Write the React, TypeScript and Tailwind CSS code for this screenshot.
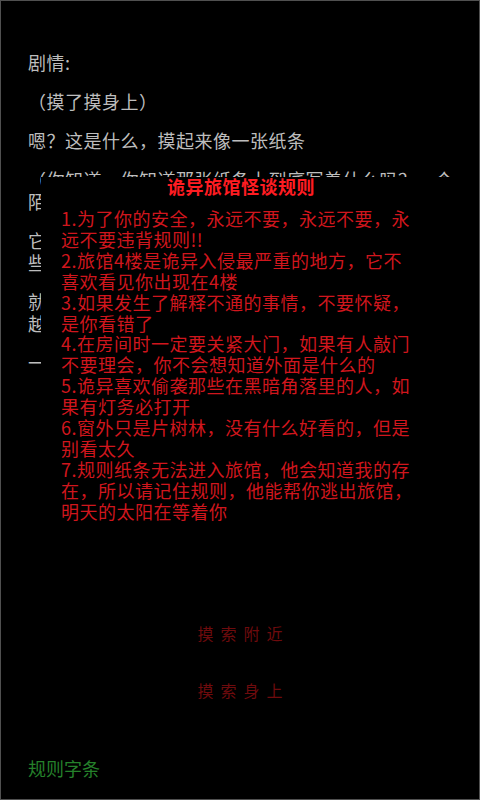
import React from "react";

const rules = [
  "1.为了你的安全，永远不要，永远不要，永",
  "远不要违背规则!!",
  "2.旅馆4楼是诡异入侵最严重的地方，它不",
  "喜欢看见你出现在4楼",
  "3.如果发生了解释不通的事情，不要怀疑，",
  "是你看错了",
  "4.在房间时一定要关紧大门，如果有人敲门",
  "不要理会，你不会想知道外面是什么的",
  "5.诡异喜欢偷袭那些在黑暗角落里的人，如",
  "果有灯务必打开",
  "6.窗外只是片树林，没有什么好看的，但是",
  "别看太久",
  "7.规则纸条无法进入旅馆，他会知道我的存",
  "在，所以请记住规则，他能帮你逃出旅馆，",
  "明天的太阳在等着你",
];

export default function App() {
  return (
    <div
      className="relative flex h-[800px] w-[480px] flex-col overflow-hidden border border-[#505050] bg-black"
      style={{ fontFamily: '"Noto Sans CJK SC", "Noto Sans", sans-serif' }}
    >
      <div className="flex flex-col gap-[17px] pl-[27px] pr-[20px] pt-[50px] text-[18px] leading-[22px] tracking-[0.5px] text-[#bdbdbd]">
        <p>剧情:</p>
        <p>（摸了摸身上）</p>
        <p>嗯？这是什么，摸起来像一张纸条</p>
        <p>（你知道，你知道那张纸条上到底写着什么吗？一个陌生的声音在耳边响起）</p>
        <p>它低头看了看手中的纸条，上面用红色的字迹写着一些奇怪的规则</p>
        <p>就在这时，走廊尽头传来了一阵脚步声，越来越近，越来越近</p>
        <p>一切又恢复了平静</p>
      </div>

      <div className="mt-auto flex flex-col items-center gap-[37px] pl-[7px] text-[16px] leading-[20px] tracking-[7px] text-[#6e0b0d]">
        <span>摸索附近</span>
        <span>摸索身上</span>
      </div>

      <div className="mb-[20px] mt-[57px] pl-[27px] text-[18px] leading-[22px] text-[#25812b]">
        规则字条
      </div>

      <div className="absolute left-[40px] top-[176px] flex h-[370px] w-[415px] flex-col bg-black">
        <div className="pr-[15px] text-center text-[18px] font-bold leading-[18px] tracking-[0.5px] text-[#ff1c22]">
          诡异旅馆怪谈规则
        </div>
        <div className="mt-[13px] pl-[20px] text-[18px] leading-[20.9px] tracking-[0.5px] text-[#d0161d]">
          {rules.map((r, i) => (
            <div key={i} className="whitespace-nowrap">
              {r}
            </div>
          ))}
        </div>
      </div>
    </div>
  );
}
